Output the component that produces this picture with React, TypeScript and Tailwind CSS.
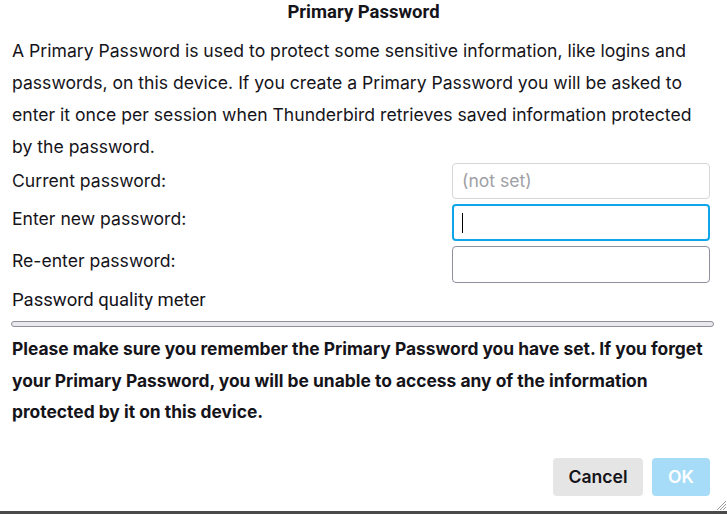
export default function App() {
    return (
        <div className="relative flex h-[514px] w-[727px] flex-col overflow-hidden bg-white font-['Inter',sans-serif] text-[#15141a]">
            <h1 className="pt-[1px] text-center font-['Roboto',sans-serif] text-[18.5px] font-bold leading-[22px]">Primary Password</h1>
            <p className="mt-[12px] px-3 text-[17.6px] leading-[32px]">
                A Primary Password is used to protect some sensitive information, like logins and passwords, on this device. If you create a Primary Password you will be asked to enter it once per session when Thunderbird retrieves saved information protected by the password.
            </p>
            <div className="mt-0 grid grid-cols-[1fr_258px] gap-y-[5px] pl-3 pr-[17px] text-[17.6px]">
                <label className="flex items-center">Current password:</label>
                <div className="flex h-[36px] items-center rounded border border-[#d6d6d9] px-[9px] text-[#a0a0a6]">(not set)</div>
                <label className="flex items-center pb-[6px]">Enter new password:</label>
                <div className="flex h-[37px] items-center rounded border-2 border-[#0ea5e9] px-[8px]">
                    <span className="h-[20px] w-px bg-black" />
                </div>
                <label className="flex items-center pb-[6px]">Re-enter password:</label>
                <div className="h-[37px] rounded border border-[#8f8f9d]" />
            </div>
            <div className="mt-[4px] px-3 font-['Roboto',sans-serif] text-[18.5px] leading-[26px]">Password quality meter</div>
            <div className="ml-[11px] mr-[13px] mt-[8px] h-[6px] rounded-full border border-[#8f8f9d] bg-[#e9e9ed]" />
            <p className="mt-[6px] px-3 text-[17.4px] font-bold leading-[31.5px]">
                Please make sure you remember the Primary Password you have set. If you forget your Primary Password, you will be unable to access any of the information protected by it on this device.
            </p>
            <div className="mt-auto flex justify-end gap-[9px] pb-[15px] pr-[17px]">
                <button className="h-[38px] w-[90px] rounded bg-[#e5e5e5] text-[17.6px] font-semibold text-[#15141a]">Cancel</button>
                <button className="h-[38px] w-[58px] rounded bg-[#a6dcf7] text-[17.6px] font-semibold text-white">OK</button>
            </div>
            <div className="h-[3px] bg-[#4a4a4a]" />
            <svg className="absolute bottom-[3px] right-0" width="12" height="12" viewBox="0 0 12 12">
                <path d="M11 2 L2 11 M11 5 L5 11 M11 8 L8 11" stroke="#9a9a9a" strokeWidth="1" />
            </svg>
        </div>
    );
}
